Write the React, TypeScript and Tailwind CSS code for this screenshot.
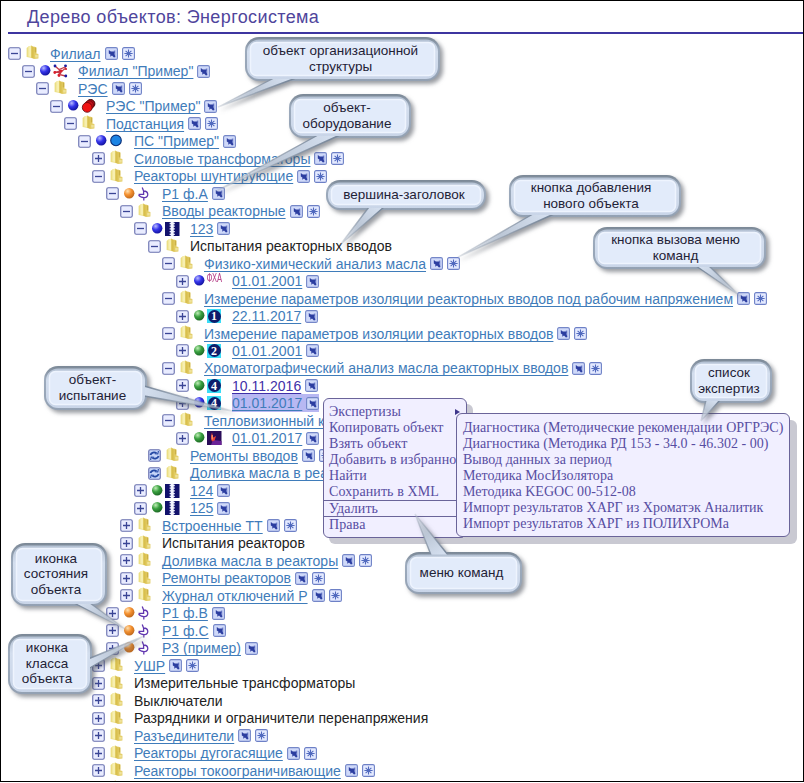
import React, { useId } from 'react';
import clsx from 'clsx';

type IconKind =
  | 'network'
  | 'district'
  | 'station'
  | 'reactor'
  | 'bushing'
  | 'fha'
  | 'badge1'
  | 'badge2'
  | 'badge4'
  | 'thermal';

type BallColor = 'blue' | 'orange' | 'green';

interface TreeRow {
  depth: number;
  label: string;
  icon?: IconKind;
  ball?: BallColor;
  toggle?: 'plus' | 'minus' | 'sync';
  plain?: boolean;
  menu?: boolean;
  add?: boolean;
  selected?: boolean;
  visited?: boolean;
}

const rows: TreeRow[] = [
  { depth: 0, label: 'Филиал', toggle: 'minus', menu: true, add: true },
  { depth: 1, label: 'Филиал "Пример"', toggle: 'minus', ball: 'blue', icon: 'network', menu: true },
  { depth: 2, label: 'РЭС', toggle: 'minus', menu: true, add: true },
  { depth: 3, label: 'РЭС "Пример"', toggle: 'minus', ball: 'blue', icon: 'district', menu: true },
  { depth: 4, label: 'Подстанция', toggle: 'minus', menu: true, add: true },
  { depth: 5, label: 'ПС "Пример"', toggle: 'minus', ball: 'blue', icon: 'station', menu: true },
  { depth: 6, label: 'Силовые трансформаторы', menu: true, add: true },
  { depth: 6, label: 'Реакторы шунтирующие', toggle: 'minus', menu: true, add: true },
  { depth: 7, label: 'Р1 ф.А', toggle: 'minus', ball: 'orange', icon: 'reactor', menu: true },
  { depth: 8, label: 'Вводы реакторные', toggle: 'minus', menu: true, add: true },
  { depth: 9, label: '123', toggle: 'minus', ball: 'blue', icon: 'bushing', menu: true },
  { depth: 10, label: 'Испытания реакторных вводов', toggle: 'minus', plain: true },
  { depth: 11, label: 'Физико-химический анализ масла', toggle: 'minus', menu: true, add: true },
  { depth: 12, label: '01.01.2001', ball: 'blue', icon: 'fha', menu: true },
  { depth: 11, label: 'Измерение параметров изоляции реакторных вводов под рабочим напряжением', toggle: 'minus', menu: true, add: true },
  { depth: 12, label: '22.11.2017', ball: 'green', icon: 'badge1', menu: true },
  { depth: 11, label: 'Измерение параметров изоляции реакторных вводов', toggle: 'minus', menu: true, add: true },
  { depth: 12, label: '01.01.2001', ball: 'green', icon: 'badge2', menu: true },
  { depth: 11, label: 'Хроматографический анализ масла реакторных вводов', toggle: 'minus', menu: true, add: true },
  { depth: 12, label: '10.11.2016', ball: 'green', icon: 'badge4', menu: true, visited: true },
  { depth: 12, label: '01.01.2017', ball: 'blue', icon: 'badge4', menu: true, selected: true },
  { depth: 11, label: 'Тепловизионный к', toggle: 'minus' },
  { depth: 12, label: '01.01.2017', ball: 'green', icon: 'thermal', menu: true },
  { depth: 10, label: 'Ремонты вводов', toggle: 'sync', menu: true, add: true },
  { depth: 10, label: 'Доливка масла в реа', toggle: 'sync' },
  { depth: 9, label: '124', ball: 'green', icon: 'bushing', menu: true },
  { depth: 9, label: '125', ball: 'green', icon: 'bushing', menu: true },
  { depth: 8, label: 'Встроенные ТТ', menu: true, add: true },
  { depth: 8, label: 'Испытания реакторов', plain: true },
  { depth: 8, label: 'Доливка масла в реакторы', menu: true, add: true },
  { depth: 8, label: 'Ремонты реакторов', menu: true, add: true },
  { depth: 8, label: 'Журнал отключений Р', menu: true, add: true },
  { depth: 7, label: 'Р1 ф.В', ball: 'orange', icon: 'reactor', menu: true },
  { depth: 7, label: 'Р1 ф.С', ball: 'orange', icon: 'reactor', menu: true },
  { depth: 7, label: 'Р3 (пример)', ball: 'orange', icon: 'reactor', menu: true },
  { depth: 6, label: 'УШР', menu: true, add: true },
  { depth: 6, label: 'Измерительные трансформаторы', plain: true },
  { depth: 6, label: 'Выключатели', plain: true },
  { depth: 6, label: 'Разрядники и ограничители перенапряжения', plain: true },
  { depth: 6, label: 'Разъединители', menu: true, add: true },
  { depth: 6, label: 'Реакторы дугогасящие', menu: true, add: true },
  { depth: 6, label: 'Реакторы токоограничивающие', menu: true, add: true },
  // only the top edge of this one fits
  { depth: 6, label: '', menu: true, add: true },
];

const Toggle = ({ kind }: { kind: 'plus' | 'minus' | 'sync' }) => (
  <svg width="13" height="13" viewBox="0 0 13 13" className="shrink-0">
    <rect x="0.75" y="0.75" width="11.5" height="11.5" rx="1.5" fill={kind === 'sync' ? '#c6d5f9' : '#e9ecff'} stroke="#6870ae" strokeWidth="1.1" />
    {kind === 'sync' ? (
      <g fill="none" stroke="#2448a4" strokeWidth="1.9">
        <path d="M2.4 6 C3.4 3.4 6 2.8 8.6 4 M10.6 7 C9.6 9.6 7 10.2 4.4 9" />
        <path d="M10.4 2 L9.8 5 L6.8 4.8 M2.6 11 L3.2 8 L6.2 8.2" strokeWidth="1.1" />
      </g>
    ) : (
      <path d={kind === 'plus' ? 'M3 6.5 H10 M6.5 3 V10' : 'M3 6.5 H10'} stroke="#3a4596" strokeWidth="1.3" />
    )}
  </svg>
);

const Folder = () => (
  <svg width="13" height="15" viewBox="0 0 13 15" className="mb-0.5 shrink-0">
    <path d="M0.6 3 L2.4 1.4 L6 0.6 V13 L0.6 12 Z" fill="#ecdf84" />
    <path d="M2.4 1.4 L5 0.8 V12 L2.4 11.4 Z" fill="#f7efb0" />
    <path d="M5.4 0.8 L8 2 V13.8 L5.4 13 Z" fill="#d9bf4e" />
    <path d="M7.6 1.6 L10.4 2.2 V8.4 L12.4 9 V13.4 L7.6 14 Z" fill="#e2cb62" />
    <path d="M8.8 2.6 L10.2 3 V7.6 L8.8 7.2 Z" fill="#cbb044" />
    <path d="M9.2 9.8 H11.8 V12.6 H9.2 Z" fill="#efe29a" />
  </svg>
);

const ballStops: Record<BallColor, [string, string, string]> = {
  blue: ['#b9bbff', '#3434ea', '#1414a0'],
  orange: ['#ffe3b4', '#f59130', '#c26a1c'],
  green: ['#c0eeb6', '#3aa040', '#1c6a24'],
};

const Ball = ({ color }: { color: BallColor }) => {
  const id = useId();
  const [light, mid, dark] = ballStops[color];
  return (
    <svg width="12" height="12" viewBox="0 0 12 12" className="shrink-0">
      <defs>
        <radialGradient id={id} cx="0.35" cy="0.3" r="0.72">
          <stop offset="0" stopColor={light} />
          <stop offset="0.5" stopColor={mid} />
          <stop offset="1" stopColor={dark} />
        </radialGradient>
      </defs>
      <circle cx="6.2" cy="5.2" r="5.2" fill={`url(#${id})`} />
    </svg>
  );
};

const ClassIcon = ({ kind }: { kind: IconKind }) => {
  switch (kind) {
    case 'network':
      return (
        <svg width="15" height="14" viewBox="0 0 15 14">
          <path d="M2 2 L6 5.5 L13.5 2.5 M6 5.5 L8 11 L12.5 12 M1 8.5 L9 7 L13 4 M5 11 L9 7" stroke="#c43a48" strokeWidth="1.3" fill="none" />
          <g fill="#1c1ca0">
            <circle cx="2" cy="2" r="1.4" />
            <circle cx="12.5" cy="1.8" r="1.4" />
            <circle cx="12.8" cy="12" r="1.4" />
          </g>
          <g fill="#d81e2c">
            <circle cx="1.8" cy="8.5" r="1.4" />
            <circle cx="6" cy="11.5" r="1.4" />
            <circle cx="8" cy="7" r="1.5" />
            <circle cx="13" cy="5" r="1.1" />
          </g>
        </svg>
      );
    case 'district':
      return (
        <svg width="15" height="14" viewBox="0 0 15 14">
          <circle cx="9.6" cy="4.8" r="4.3" fill="#a80d16" stroke="#3c0508" />
          <circle cx="8" cy="6.3" r="4.5" fill="#c4101a" stroke="#5c060a" strokeWidth="0.6" />
          <circle cx="6.2" cy="8.4" r="4.9" fill="#f01414" stroke="#5c060a" strokeWidth="0.8" />
        </svg>
      );
    case 'station':
      return (
        <svg width="15" height="14" viewBox="0 0 15 14">
          <circle cx="7" cy="6.4" r="5.3" fill="#1c84e4" stroke="#0a2e76" strokeWidth="1.1" />
        </svg>
      );
    case 'reactor':
      return (
        <svg width="15" height="14" viewBox="0 0 15 14">
          <path d="M5.2 0.6 L6.6 4 M1.6 7.4 H6.6 V4 C11.6 3.8 12.4 10.4 7.4 10.6 C4.4 10.7 2.6 9.8 1.6 7.8 M6.8 10.6 V13.4" stroke="#6238b0" strokeWidth="1.3" fill="none" />
        </svg>
      );
    case 'bushing':
      return (
        <svg width="15" height="14" viewBox="0 0 15 14">
          <rect width="14.5" height="14" fill="#12126c" />
          <path d="M7.2 0 V14" stroke="#f2f4ff" strokeWidth="3" />
          <path d="M4.6 1.5 H9.8 M4.6 4.2 H9.8 M4.6 6.9 H9.8 M4.6 9.6 H9.8 M4.6 12.3 H9.8" stroke="#f2f4ff" strokeWidth="1.3" />
        </svg>
      );
    case 'fha':
      return (
        <span className="-mt-1 inline-block origin-left scale-x-[0.7] font-['Liberation_Mono',monospace] text-[12px] leading-none text-[#bb4c90]">
          ФХА
        </span>
      );
    case 'thermal':
      return (
        <svg width="15" height="14" viewBox="0 0 15 14">
          <rect width="14.5" height="14" fill="#2a0c58" />
          <path d="M4 14 L6 9 L14.5 10 V14 Z" fill="#6a2296" />
          <path d="M5 10.5 C3.4 7.5 4 4 5 1.5 L6.2 6.5 L9 5 L7.6 9.6 Z" fill="#e8413a" />
          <path d="M5.2 8.5 V4" stroke="#ffb070" />
        </svg>
      );
    default:
      return (
        <span className="flex h-[14px] w-[14px] items-center justify-center bg-[#3adcf6]">
          <span className="flex h-[13px] w-[13px] items-center justify-center rounded-full bg-[#0c1c6c] font-['Liberation_Serif',serif] text-[12px] leading-none font-bold text-white">
            {kind.slice(-1)}
          </span>
        </span>
      );
  }
};

const MenuButton = () => (
  <svg width="13" height="13" viewBox="0 0 13 13" className="shrink-0">
    <rect x="0.6" y="0.6" width="11.8" height="11.8" rx="1.5" fill="#cfd9f9" stroke="#7587c8" strokeWidth="1.1" />
    <path d="M8.8 3.4 H10.4 V10.4 H8.8 Z" fill="#8494d6" />
    <path d="M3.8 3 L5.8 4.4 L9.8 4.6 L9.2 7 L10.4 9.6 L9 10.6 L7 8.6 L5.2 9.8 L5.4 7.4 L3.8 6.4 Z" fill="#2c3ea0" />
  </svg>
);

const AddButton = () => (
  <svg width="13" height="13" viewBox="0 0 13 13" className="shrink-0">
    <rect x="0.6" y="0.6" width="11.8" height="11.8" rx="1.5" fill="#e4eaff" stroke="#6d80c6" strokeWidth="1.1" />
    <path d="M6.5 2.5 V10.5 M2.4 6.5 H10.6 M3.6 3.8 L9.4 9.2 M9.4 3.8 L3.6 9.2" stroke="#5069be" strokeWidth="1.1" />
  </svg>
);

const Row = ({ row }: { row: TreeRow }) => (
  <div className="flex h-[17.49px] shrink-0 items-center" style={{ paddingLeft: row.depth * 14 }}>
    <Toggle kind={row.toggle ?? 'plus'} />
    {row.ball ? (
      <div className="ml-1 flex w-[39px] shrink-0 items-center">
        <Ball color={row.ball} />
        <div className="flex w-[20px] shrink-0 items-center pl-0.5">
          <ClassIcon kind={row.icon ?? 'station'} />
        </div>
      </div>
    ) : (
      <div className="ml-[5px] w-[24px] shrink-0">
        <Folder />
      </div>
    )}
    <div className={clsx('flex items-center', row.selected && 'bg-[#b8b8f2]')}>
      <span
        className={clsx(
          'pt-px text-[14px] leading-[17px] tracking-[0.02px] whitespace-nowrap',
          !row.label && 'w-[79px]',
          row.plain ? 'text-[#222222]' : 'underline decoration-1 underline-offset-2 [text-decoration-skip-ink:none]',
          !row.plain && (row.visited ? 'text-[#3f30a8]' : 'text-[#3f7cba]'),
        )}
      >
        {row.label}
      </span>
      {row.menu && (
        <span className="ml-1 flex gap-1">
          <MenuButton />
          {row.add && <AddButton />}
        </span>
      )}
    </div>
  </div>
);

interface CalloutProps {
  x: number;
  y: number;
  w: number;
  h: number;
  lines: string[];
  // text shift from the centre of the balloon
  dx?: number;
  // tail in page coordinates: base, tip, base
  tail: [number, number][];
}

const callouts: CalloutProps[] = [
  { x: 245, y: 37, w: 195, h: 44, dx: -2, lines: ['объект организационной', 'структуры'], tail: [[274, 78], [218, 107], [296, 78]] },
  { x: 289, y: 94, w: 122, h: 44, dx: -3, lines: ['объект-', 'оборудование'], tail: [[318, 135], [216, 191], [340, 135]] },
  { x: 326, y: 180, w: 160, h: 30, dx: -2, lines: ['вершина-заголовок'], tail: [[369, 207], [340, 245], [384, 207]] },
  { x: 509, y: 175, w: 172, h: 42, dx: -4, lines: ['кнопка добавления', 'нового объекта'], tail: [[533, 214], [458, 257], [554, 214]] },
  { x: 593, y: 227, w: 173, h: 42, dx: -4, lines: ['кнопка вызова меню', 'команд'], tail: [[696, 266], [740, 296], [709, 266]] },
  { x: 690, y: 359, w: 82, h: 44, dx: -2, lines: ['список', 'экспертиз'], tail: [[706, 400], [701, 421], [720, 400]] },
  { x: 44, y: 366, w: 103, h: 44, dx: -3, lines: ['объект-', 'испытание'], tail: [[144, 386], [232, 411], [144, 396]] },
  { x: 405, y: 552, w: 117, h: 42, dx: -2, lines: ['меню команд'], tail: [[431, 555], [415, 514], [448, 555]] },
  { x: 11, y: 543, w: 96, h: 63, dx: -3, lines: ['иконка', 'состояния', 'объекта'], tail: [[74, 603], [125, 629], [90, 603]] },
  { x: 8, y: 634, w: 84, h: 60, dx: -3, lines: ['иконка', 'класса', 'объекта'], tail: [[88, 659], [144, 636], [88, 669]] },
];

const Callout = ({ x, y, w, h, lines, dx = 0, tail }: CalloutProps) => {
  const id = useId();
  const [a, tip, b] = tail.map(([px, py]) => [px - x, py - y]);
  return (
    <div
      className="absolute flex flex-col items-center justify-center pb-px font-['Liberation_Sans',sans-serif] text-[13.5px] leading-[15.5px] text-[#1f2236]"
      style={{ left: x, top: y, width: w, height: h }}
    >
      <svg
        width={w}
        height={h}
        className="absolute inset-0 overflow-visible drop-shadow-[3px_3px_2px_rgba(70,75,85,0.55)]"
      >
        <defs>
          <linearGradient id={`${id}b`} x1="0" y1="0" x2="0" y2="1">
            <stop offset="0" stopColor="#7b8896" />
            <stop offset="0.3" stopColor="#9dabbd" />
            <stop offset="1" stopColor="#93a1b3" />
          </linearGradient>
          <linearGradient id={`${id}f`} x1="0" y1="0" x2="0" y2="1">
            <stop offset="0" stopColor="#b4c1d3" />
            <stop offset="0.3" stopColor="#d3deee" />
            <stop offset="1" stopColor="#c9d5e8" />
          </linearGradient>
          <linearGradient id={`${id}t`} gradientUnits="userSpaceOnUse" x1={(a[0] + b[0]) / 2} y1={(a[1] + b[1]) / 2} x2={tip[0]} y2={tip[1]}>
            <stop offset="0" stopColor="#d3deee" />
            <stop offset="0.5" stopColor="#bcc7d6" />
            <stop offset="1" stopColor="#c6ced9" stopOpacity="0.35" />
          </linearGradient>
          <linearGradient id={`${id}s`} gradientUnits="userSpaceOnUse" x1={(a[0] + b[0]) / 2} y1={(a[1] + b[1]) / 2} x2={tip[0]} y2={tip[1]}>
            <stop offset="0" stopColor="#7a899c" />
            <stop offset="1" stopColor="#9aa5b3" stopOpacity="0.25" />
          </linearGradient>
        </defs>
        <rect width={w} height={h} rx="14" fill={`url(#${id}b)`} />
        <polyline points={`${a} ${tip} ${b}`} fill={`url(#${id}t)`} stroke={`url(#${id}s)`} strokeWidth="1.4" />
        <rect x="2" y="2.5" width={w - 4} height={h - 4.5} rx="12" fill={`url(#${id}f)`} />
        <rect x="5.5" y="5.5" width={w - 11} height={h - 11} rx="6" fill="#e2ebfa" stroke="#eef4fe" strokeWidth="1.5" />
      </svg>
      {lines.map(line => (
        <span key={line} className="relative whitespace-nowrap" style={{ left: dx }}>
          {line}
        </span>
      ))}
    </div>
  );
};

const menuTop = ['Экспертизы', 'Копировать объект', 'Взять объект', 'Добавить в избранное', 'Найти', 'Сохранить в XML'];

const experts = [
  'Диагностика (Методические рекомендации ОРГРЭС)',
  'Диагностика (Методика РД 153 - 34.0 - 46.302 - 00)',
  'Вывод данных за период',
  'Методика МосИзолятора',
  'Методика KEGOC 00-512-08',
  'Импорт результатов ХАРГ из Хроматэк Аналитик',
  'Импорт результатов ХАРГ из ПОЛИХРОМа',
];

const ContextMenu = () => (
  <div className="font-['Liberation_Serif',serif] text-[14px] leading-4 tracking-[0.03px] whitespace-nowrap text-[#574da2]">
    <div className="absolute top-[398px] left-[323px] h-[140px] w-[144px] rounded-md border border-[#6a6499] bg-[#f1efff] pt-[5px] shadow-[6px_6px_0_#c9c9d2]">
      {menuTop.map((item, i) => (
        <div key={item} className="flex h-4 items-center justify-between overflow-hidden pr-1.5 pl-[5px] tracking-[0.1px]">
          <span>{item}</span>
          {i === 0 && (
            <svg width="5" height="6" viewBox="0 0 5 6">
              <path d="M0 0 L5 3 L0 6 Z" fill="#3f378c" />
            </svg>
          )}
        </div>
      ))}
      <div className="h-[17px] border-y border-[#6a6499] pl-[5px] tracking-[0.1px]">Удалить</div>
      <div className="pl-[5px] tracking-[0.1px]">Права</div>
    </div>
    <div className="absolute top-[413px] left-[456px] h-[124px] w-[334px] rounded-md border border-[#6a6499] bg-[#f1efff] pt-1.5 pl-1.5 shadow-[7px_7px_0_#c9c9d2]">
      {experts.map(item => (
        <div key={item}>{item}</div>
      ))}
    </div>
  </div>
);

export default function App() {
  return (
    <div className="relative h-[783px] w-[804px] overflow-hidden bg-white font-['Liberation_Sans',sans-serif]">
      <div className="flex h-[782px] flex-col overflow-hidden border border-black pl-[7px]">
        <h1 className="h-[33px] shrink-0 border-b-2 border-[#3d35a0] pt-1 pl-[19px] text-[18px] leading-6 tracking-[0.38px] text-[#4f459c]">
          Дерево объектов: Энергосистема
        </h1>
        <div className="mt-[11px] flex flex-col">
          {rows.map((row, i) => (
            <Row key={i} row={row} />
          ))}
        </div>
      </div>
      <ContextMenu />
      {callouts.map(c => (
        <Callout key={c.lines.join()} {...c} />
      ))}
    </div>
  );
}
